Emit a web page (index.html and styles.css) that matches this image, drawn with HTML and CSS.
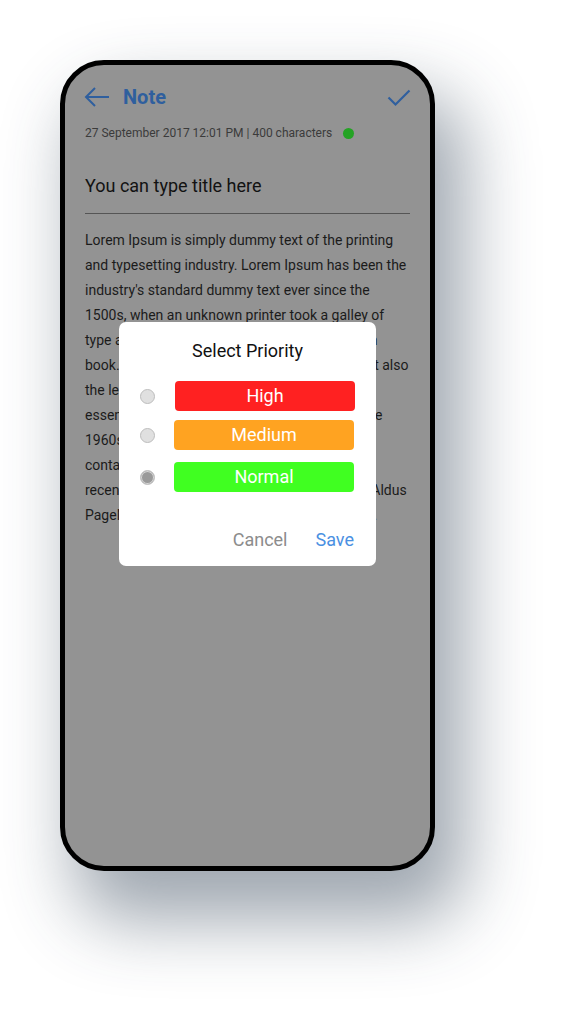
FILE: index.html
```html
<!DOCTYPE html>
<html>
<head>
<meta charset="utf-8">
<link rel="stylesheet" href="styles.css">
</head>
<body>
<div class="stage">
  <div class="phone">
    <div class="screen">
      <div class="header">
        <div class="header-left">
          <svg class="icon-back" width="26" height="24" viewBox="0 0 26 24"><path d="M2 12 H25 M11 3 L2 12 L11 21" fill="none" stroke="#2f5f9e" stroke-width="2"/></svg>
          <span class="header-title">Note</span>
        </div>
        <svg class="icon-check" width="24" height="20" viewBox="0 0 24 20"><path d="M1.5 9.5 L8.5 16.5 L22.5 2.5" fill="none" stroke="#2f5f9e" stroke-width="2.2"/></svg>
      </div>
      <div class="meta">
        <span class="meta-text">27 September 2017 12:01 PM | 400 characters</span>
        <span class="status-dot"></span>
      </div>
      <div class="note-title">You can type title here</div>
      <div class="note-body">Lorem Ipsum is simply dummy text of the printing<br>and typesetting industry. Lorem Ipsum has been the<br>industry's standard dummy text ever since the<br>1500s, when an unknown printer took a galley of<br>type and scrambled it to make a type specimen<br>book. It has survived not only five centuries, but also<br>the leap into electronic typesetting, remaining<br>essentially unchanged. It was popularised in the<br>1960s with the release of Letraset sheets<br>containing Lorem Ipsum passages, and more<br>recently with desktop publishing software like Aldus<br>PageMaker including versions of Lorem Ipsum.</div>

      <div class="dialog">
        <div class="dialog-title">Select Priority</div>
        <div class="options">
          <div class="option option-high">
            <span class="radio"></span>
            <span class="chip chip-high">High</span>
          </div>
          <div class="option option-medium">
            <span class="radio"></span>
            <span class="chip chip-medium">Medium</span>
          </div>
          <div class="option option-normal">
            <span class="radio radio-checked"></span>
            <span class="chip chip-normal">Normal</span>
          </div>
        </div>
        <div class="dialog-actions">
          <span class="btn btn-cancel">Cancel</span>
          <span class="btn btn-save">Save</span>
        </div>
      </div>
    </div>
  </div>
</div>
</body>
</html>
```
FILE: styles.css
```css
* { box-sizing: border-box; }
html, body {
  margin: 0;
  padding: 0;
  background: #ffffff;
}
body {
  font-family: Roboto, "Noto Sans", "Liberation Sans", sans-serif;
  width: 575px;
  height: 1012px;
  overflow: hidden;
}
.stage {
  padding: 60px 0 0 60px;
}
.phone {
  width: 375px;
  height: 811px;
  border: 5px solid #000;
  border-radius: 44px;
  background: #939393;
  box-shadow: 22px 42px 70px 8px rgba(45, 62, 82, 0.45);
  overflow: hidden;
}
.screen {
  position: relative;
  height: 100%;
  padding: 12px 20px 0 20px;
}
.header {
  display: flex;
  align-items: center;
  justify-content: space-between;
  height: 40px;
}
.header-left {
  display: flex;
  align-items: center;
}
.icon-back {
  display: block;
  margin-left: -1px;
}
.header-title {
  margin-left: 13px;
  font-size: 20px;
  font-weight: 700;
  color: #2f5f9e;
  line-height: 24px;
}
.icon-check {
  display: block;
  margin-right: -1px;
  margin-top: 1px;
}
.meta {
  display: flex;
  align-items: center;
  margin-top: 8px;
  height: 16px;
}
.meta-text {
  font-size: 12px;
  line-height: 16px;
  color: #3b3b3b;
}
.status-dot {
  width: 11px;
  height: 11px;
  border-radius: 50%;
  background: #24a324;
  margin-left: 11px;
}
.note-title {
  margin-top: 33px;
  font-size: 18px;
  line-height: 24px;
  color: #121212;
  padding-bottom: 15px;
  border-bottom: 1px solid #555555;
}
.note-body {
  margin-top: 14px;
  font-size: 14px;
  line-height: 25px;
  color: #1b1b1b;
  white-space: nowrap;
}
.dialog {
  position: absolute;
  left: 54px;
  top: 257px;
  width: 257px;
  height: 244px;
  background: #ffffff;
  border-radius: 7px;
  padding: 17px 22px 0 20px;
  display: flex;
  flex-direction: column;
}
.dialog-title {
  text-align: center;
  font-size: 18px;
  line-height: 24px;
  color: #111111;
  padding-left: 2px;
}
.options {
  margin-top: 18px;
  display: flex;
  flex-direction: column;
}
.option {
  display: flex;
  align-items: center;
  height: 30px;
}
.option-medium { margin-top: 9px; }
.option-normal { margin-top: 12px; }
.radio {
  width: 15px;
  height: 15px;
  border-radius: 50%;
  background: #e0e0e0;
  border: 1px solid #bdbdbd;
  margin-left: 1px;
  flex: none;
}
.radio-checked {
  background: #9a9a9a;
  border-color: #c4c4c4;
  box-shadow: inset 0 0 0 1px #d8d8d8;
}
.chip {
  flex: 1;
  margin-left: 19px;
  height: 30px;
  border-radius: 4px;
  color: #ffffff;
  font-size: 18px;
  line-height: 30px;
  text-align: center;
}
.option-high .chip { margin-left: 20px; margin-right: -1px; }
.chip-high { background: #ff2121; }
.chip-medium { background: #ffa321; }
.chip-normal { background: #40ff21; }
.dialog-actions {
  margin-top: auto;
  margin-bottom: 15px;
  display: flex;
  justify-content: flex-end;
  gap: 28px;
}
.btn {
  font-size: 18px;
  line-height: 22px;
}
.btn-cancel { color: #8c8c8c; }
.btn-save { color: #4a90e2; }
```
